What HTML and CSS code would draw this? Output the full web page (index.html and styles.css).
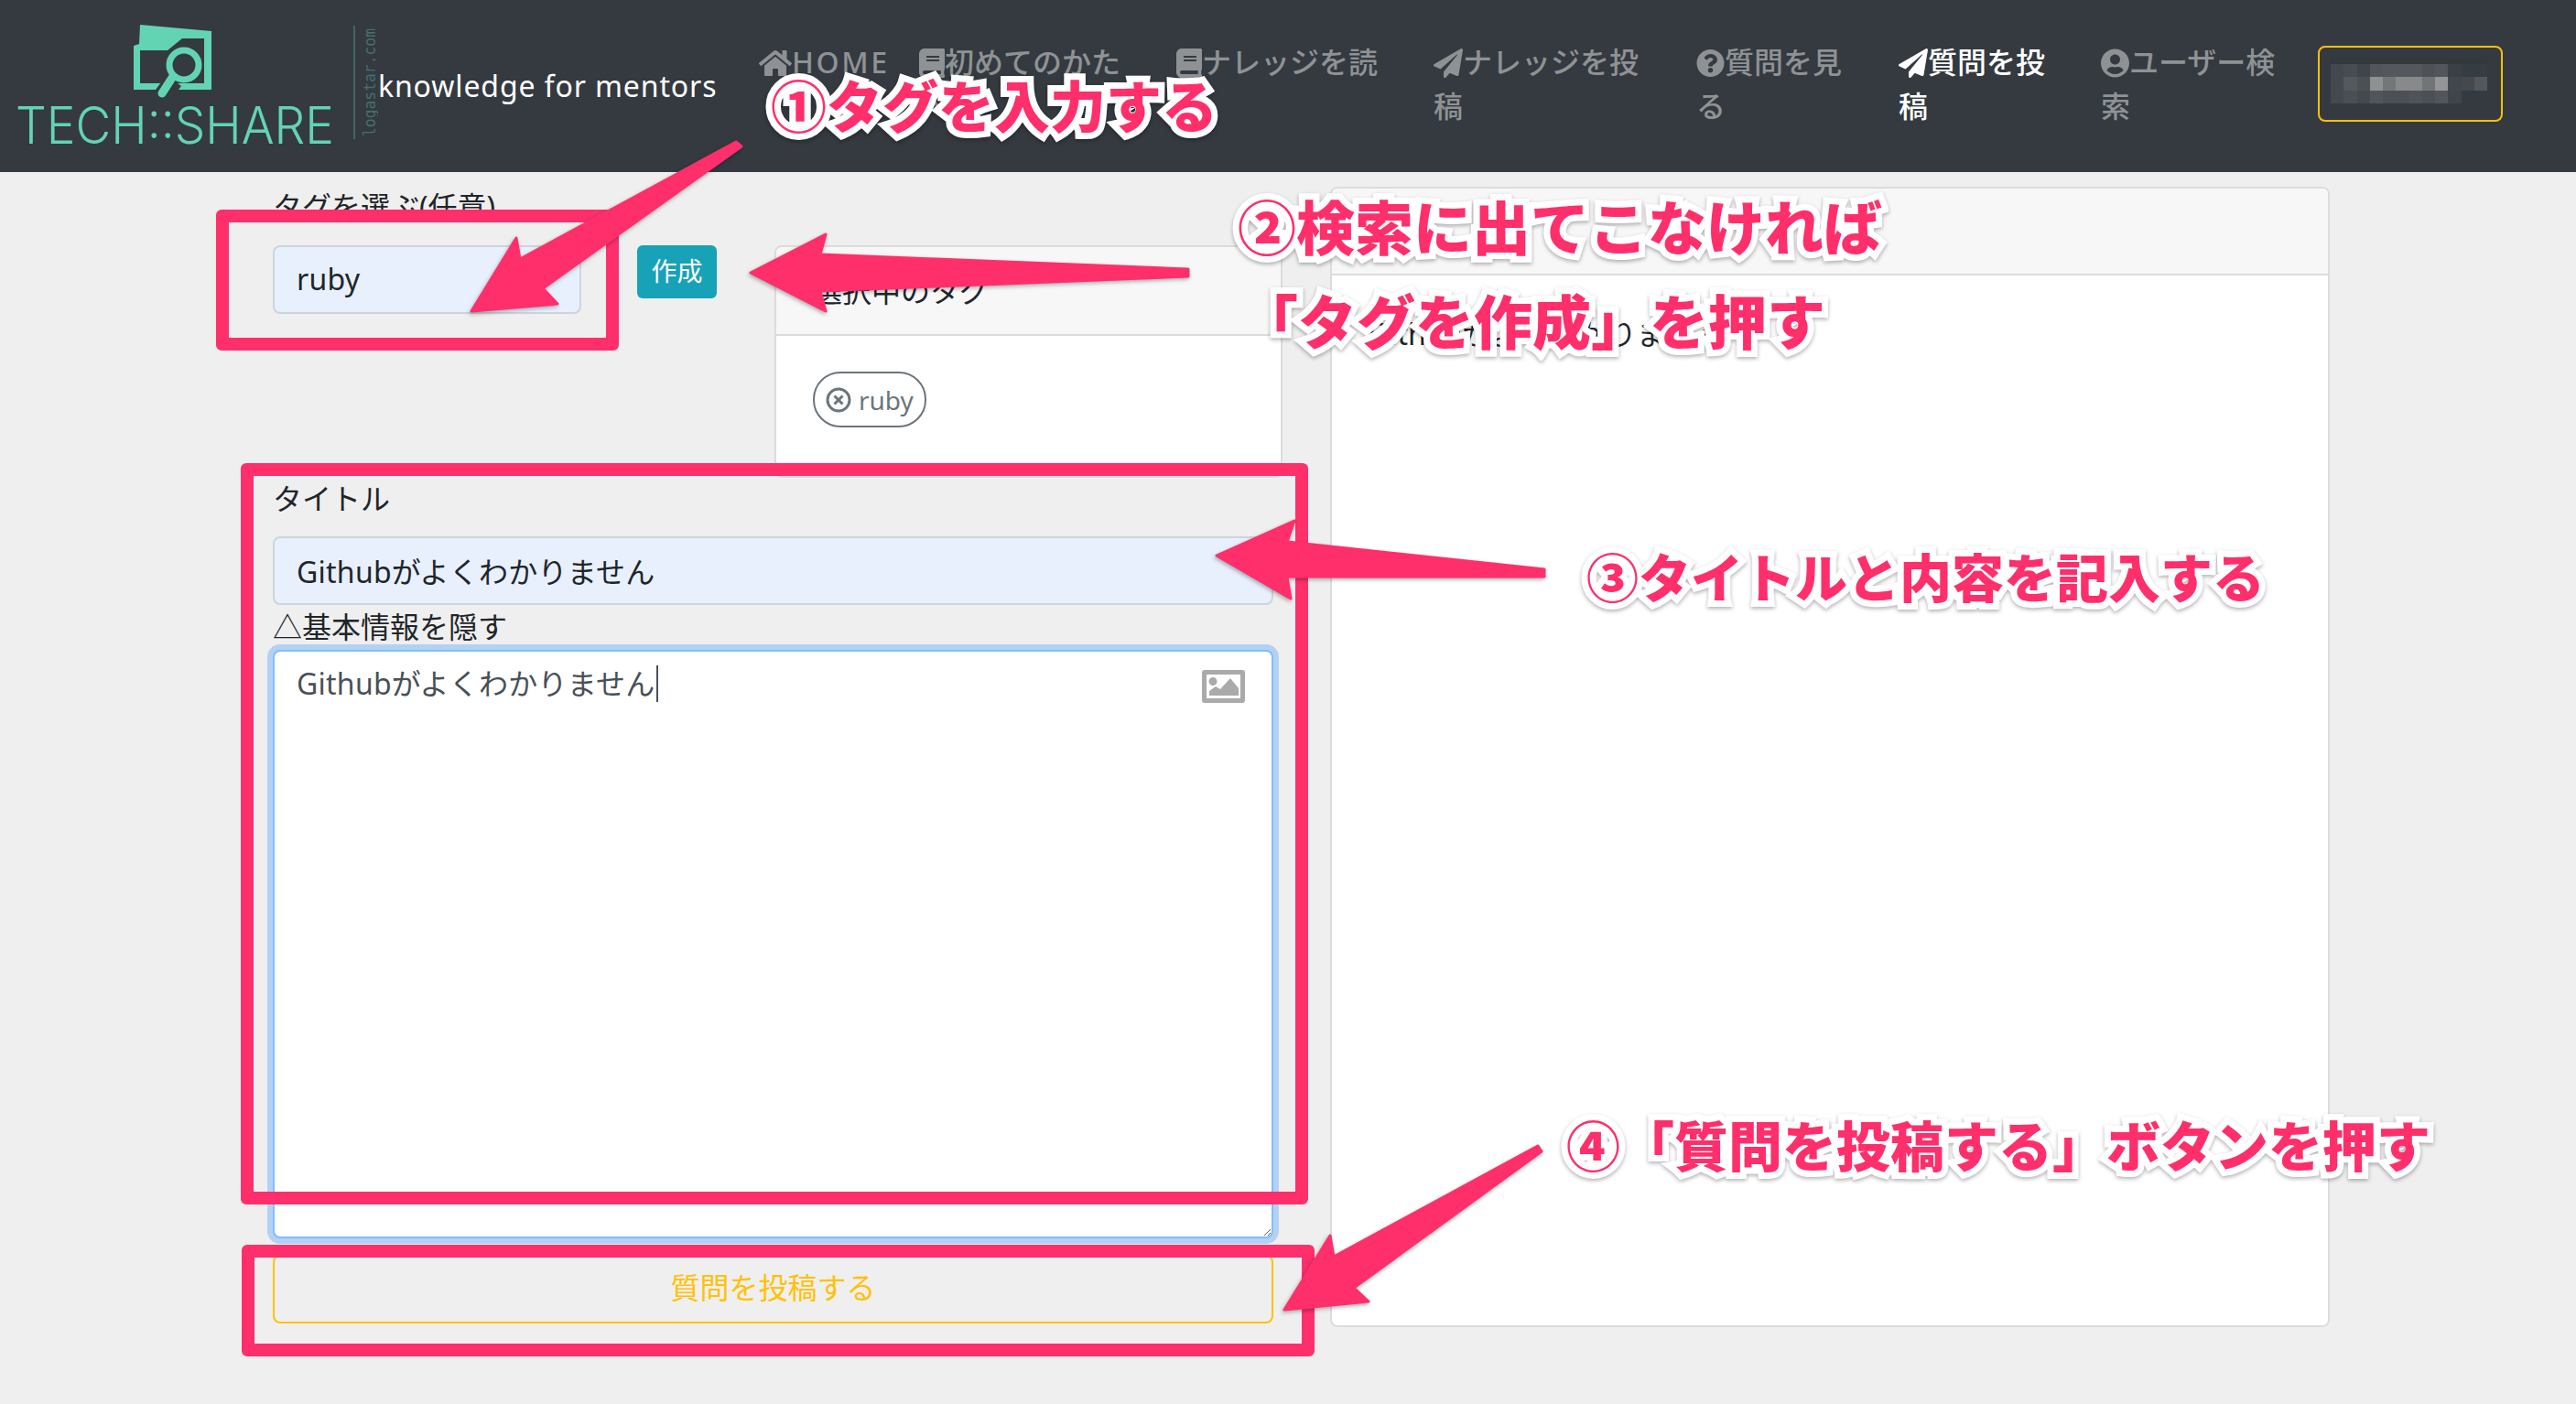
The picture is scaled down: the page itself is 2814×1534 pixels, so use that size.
FILE: index.html
```html
<!DOCTYPE html>
<html lang="ja">
<head>
<meta charset="utf-8">
<title>TECH::SHARE</title>
<link rel="stylesheet" href="styles.css">
</head>
<body>
<div class="page">
  <header class="navbar">
    <svg class="logo" viewBox="0 0 413 188" width="413" height="188" aria-label="TECH::SHARE">
      <path class="logo-fill" d="M153 27 L231 34 V98 H146 V50 L152 48 Z"/>
      <path class="logo-cut" d="M153 55 H183 L199 42 H223 V91 H153 Z"/>
      <circle class="logo-ring" cx="201" cy="71" r="16"/>
      <line class="logo-gap" x1="190" y1="88" x2="178" y2="104"/>
      <line class="logo-handle" x1="188" y1="85" x2="177" y2="102"/>
      <text class="logo-text" x="17" y="157" textLength="348" lengthAdjust="spacingAndGlyphs">TECH::SHARE</text>
      <line class="logo-rule" x1="387" y1="28" x2="387" y2="152"/>
      <text class="logo-domain" transform="translate(410 149) rotate(-90)" textLength="118" lengthAdjust="spacingAndGlyphs">logastar.com</text>
    </svg>
    <div class="tagline">knowledge for mentors</div>
    <nav class="nav">
      <a class="nav-link nav-home"><svg class="ico ico-home" viewBox="0 0 576 512"><path d="M280.37 148.26L96 300.11V464a16 16 0 0 0 16 16l112.06-.29a16 16 0 0 0 15.92-16V368a16 16 0 0 1 16-16h64a16 16 0 0 1 16 16v95.64a16 16 0 0 0 16 16.05L464 480a16 16 0 0 0 16-16V300L295.67 148.26a12.19 12.19 0 0 0-15.3 0zM571.6 251.47L488 182.56V44.05a12 12 0 0 0-12-12h-56a12 12 0 0 0-12 12v72.61L318.47 43a48 48 0 0 0-61 0L4.34 251.47a12 12 0 0 0-1.6 16.9l25.5 31A12 12 0 0 0 45.15 301l235.22-193.74a12.19 12.19 0 0 1 15.3 0L530.9 301a12 12 0 0 0 16.9-1.6l25.5-31a12 12 0 0 0-1.7-16.93z"/></svg>HOME</a>
      <a class="nav-link"><svg class="ico ico-book" viewBox="0 0 448 512"><path d="M448 360V24c0-13.3-10.7-24-24-24H96C43 0 0 43 0 96v320c0 53 43 96 96 96h328c13.3 0 24-10.7 24-24v-16c0-7.5-3.5-14.3-8.9-18.7-4.2-15.4-4.2-59.3 0-74.7 5.4-4.3 8.9-11.1 8.9-18.6zM128 134c0-3.3 2.7-6 6-6h212c3.3 0 6 2.7 6 6v20c0 3.3-2.7 6-6 6H134c-3.3 0-6-2.7-6-6v-20zm0 64c0-3.3 2.7-6 6-6h212c3.3 0 6 2.7 6 6v20c0 3.3-2.7 6-6 6H134c-3.3 0-6-2.7-6-6v-20zm253.4 250H96c-17.7 0-32-14.3-32-32 0-17.6 14.4-32 32-32h285.4c-1.9 17.1-1.9 46.9 0 64z"/></svg>初めてのかたへ</a>
      <a class="nav-link"><svg class="ico ico-book" viewBox="0 0 448 512"><path d="M448 360V24c0-13.3-10.7-24-24-24H96C43 0 0 43 0 96v320c0 53 43 96 96 96h328c13.3 0 24-10.7 24-24v-16c0-7.5-3.5-14.3-8.9-18.7-4.2-15.4-4.2-59.3 0-74.7 5.4-4.3 8.9-11.1 8.9-18.6zM128 134c0-3.3 2.7-6 6-6h212c3.3 0 6 2.7 6 6v20c0 3.3-2.7 6-6 6H134c-3.3 0-6-2.7-6-6v-20zm0 64c0-3.3 2.7-6 6-6h212c3.3 0 6 2.7 6 6v20c0 3.3-2.7 6-6 6H134c-3.3 0-6-2.7-6-6v-20zm253.4 250H96c-17.7 0-32-14.3-32-32 0-17.6 14.4-32 32-32h285.4c-1.9 17.1-1.9 46.9 0 64z"/></svg>ナレッジを読む</a>
      <a class="nav-link"><svg class="ico ico-plane" viewBox="0 0 512 512"><path d="M476 3.2L12.5 270.6c-18.1 10.4-15.8 35.6 2.2 43.2L121 358.4l287.3-253.2c5.5-4.9 13.3 2.6 8.6 8.3L176 407v80.5c0 23.6 28.5 32.9 42.5 15.8L282 426l124.6 52.2c14.2 6 30.4-2.9 33-18.2l72-432C515 7.8 493.3-6.8 476 3.2z"/></svg>ナレッジを投稿</a>
      <a class="nav-link"><svg class="ico ico-circle" viewBox="0 0 512 512"><path d="M504 256c0 136.997-111.043 248-248 248S8 392.997 8 256C8 119.083 119.043 8 256 8s248 111.083 248 248zM262.655 90c-54.497 0-89.255 22.957-116.549 63.758-3.536 5.286-2.353 12.415 2.715 16.258l34.699 26.31c5.205 3.947 12.621 3.008 16.665-2.122 17.864-22.658 30.113-35.797 57.303-35.797 20.429 0 45.698 13.148 45.698 32.958 0 14.976-12.363 22.667-32.534 33.976C247.128 238.528 216 254.941 216 296v4c0 6.627 5.373 12 12 12h56c6.627 0 12-5.373 12-12v-1.333c0-28.462 83.186-29.647 83.186-106.667 0-58.002-60.165-102-116.531-102zM256 338c-25.365 0-46 20.635-46 46 0 25.364 20.635 46 46 46s46-20.636 46-46c0-25.365-20.635-46-46-46z"/></svg>質問を見る</a>
      <a class="nav-link is-active"><svg class="ico ico-plane" viewBox="0 0 512 512"><path d="M476 3.2L12.5 270.6c-18.1 10.4-15.8 35.6 2.2 43.2L121 358.4l287.3-253.2c5.5-4.9 13.3 2.6 8.6 8.3L176 407v80.5c0 23.6 28.5 32.9 42.5 15.8L282 426l124.6 52.2c14.2 6 30.4-2.9 33-18.2l72-432C515 7.8 493.3-6.8 476 3.2z"/></svg>質問を投稿</a>
      <a class="nav-link"><svg class="ico ico-circle" viewBox="0 0 496 512"><path d="M248 8C111 8 0 119 0 256s111 248 248 248 248-111 248-248S385 8 248 8zm0 96c48.6 0 88 39.4 88 88s-39.4 88-88 88-88-39.4-88-88 39.4-88 88-88zm0 344c-58.7 0-111.3-26.6-146.5-68.2 18.8-35.4 55.6-59.8 98.5-59.8 2.4 0 4.8.4 7.1 1.1 13 4.2 26.6 6.9 40.9 6.9 14.3 0 28-2.7 40.9-6.9 2.3-.7 4.7-1.1 7.1-1.1 42.9 0 79.7 24.4 98.5 59.8C359.3 421.4 306.7 448 248 448z"/></svg>ユーザー検索</a>
    </nav>
    <div class="user-btn">
      <svg class="pixels" viewBox="0 0 12 3.5" width="171" height="50" preserveAspectRatio="none" shape-rendering="crispEdges">
        <rect width="12" height="0.5" fill="#32393a"/>
        <rect y="0.5" width="1" height="1" fill="#42484f"/><rect x="1" y="0.5" width="1" height="1" fill="#474c53"/><rect x="2" y="0.5" width="1" height="1" fill="#3f454b"/><rect x="3" y="0.5" width="1" height="1" fill="#52565c"/><rect x="4" y="0.5" width="3" height="1" fill="#54585e"/><rect x="7" y="0.5" width="1" height="1" fill="#4e5257"/><rect x="8" y="0.5" width="1" height="1" fill="#52565c"/><rect x="9" y="0.5" width="1" height="1" fill="#3a4046"/><rect x="10" y="0.5" width="2" height="1" fill="#353c42"/>
        <rect y="1.5" width="1" height="1" fill="#44494f"/><rect x="1" y="1.5" width="1" height="1" fill="#55595e"/><rect x="2" y="1.5" width="1" height="1" fill="#4b5055"/><rect x="3" y="1.5" width="1" height="1" fill="#8e9092"/><rect x="4" y="1.5" width="1" height="1" fill="#74777a"/><rect x="5" y="1.5" width="2" height="1" fill="#87898b"/><rect x="7" y="1.5" width="1" height="1" fill="#727578"/><rect x="8" y="1.5" width="1" height="1" fill="#939597"/><rect x="9" y="1.5" width="1" height="1" fill="#42474c"/><rect x="10" y="1.5" width="1" height="1" fill="#45494f"/><rect x="11" y="1.5" width="1" height="1" fill="#53575c"/>
        <rect y="2.5" width="1" height="1" fill="#44494f"/><rect x="1" y="2.5" width="1" height="1" fill="#4a4f54"/><rect x="2" y="2.5" width="1" height="1" fill="#45494f"/><rect x="3" y="2.5" width="1" height="1" fill="#52565b"/><rect x="4" y="2.5" width="2" height="1" fill="#4c5055"/><rect x="6" y="2.5" width="1" height="1" fill="#50545a"/><rect x="7" y="2.5" width="1" height="1" fill="#4c5056"/><rect x="8" y="2.5" width="1" height="1" fill="#52565b"/><rect x="9" y="2.5" width="1" height="1" fill="#3f454b"/><rect x="10" y="2.5" width="2" height="1" fill="#343a41"/>
      </svg>
    </div>
  </header>

  <main class="main">
    <section class="form-col">
      <div class="tag-row">
        <div class="tag-field">
          <label class="label label-tag">タグを選ぶ(任意)</label>
          <input class="input" type="text" value="ruby">
        </div>
        <div class="tag-action"><button class="btn-create">作成</button></div>
        <div class="tag-selected">
          <div class="card card-tags">
            <div class="card-header header-tags">選択中のタグ</div>
            <div class="card-body body-tags">
              <span class="chip"><svg class="chip-x" viewBox="0 0 28 28"><circle cx="14" cy="14" r="12"/><path d="M9.500 9.500 L18.500 18.500 M18.500 9.500 L9.500 18.500"/></svg>ruby</span>
            </div>
          </div>
        </div>
      </div>
      <label class="label label-title">タイトル</label>
      <input class="input input-title" type="text" value="Githubがよくわかりません">
      <div class="label">△基本情報を隠す</div>
      <div class="editor">
        <textarea class="textarea">Githubがよくわかりません</textarea>
        <span class="caret"></span>
        <svg class="editor-img" viewBox="0 0 47 36"><path fill-rule="evenodd" d="M3 0H44A3 3 0 0 1 47 3V33A3 3 0 0 1 44 36H3A3 3 0 0 1 0 33V3A3 3 0 0 1 3 0ZM5 5V31H42V5ZM12 8A4.500 4.500 0 1 1 12 17A4.500 4.500 0 0 1 12 8ZM8 28V23L15 18L20 21L31 9L40 20V28Z"/></svg>
      </div>
      <button class="btn-submit">質問を投稿する</button>
    </section>
    <section class="card card-preview">
      <div class="card-header header-preview"></div>
      <div class="card-body body-preview">Githubがよくわかりません</div>
    </section>
  </main>

  <div class="frame frame-tag"></div>
  <div class="frame frame-content"></div>
  <div class="frame frame-submit"></div>

  <svg class="arrows" viewBox="0 0 2814 1534" width="2814" height="1534">
    <polygon points="804,155 568,283 564,260 515,340 609,332 593,315 810,160"/>
    <polygon points="1298,294 896,278 902,256 820,298 902,340 896,318 1298,302"/>
    <polygon points="1687,622 1406,592 1414,569 1329,607 1410,654 1406,630 1687,630"/>
    <polygon points="1680,1252 1457,1373 1453,1350 1403,1431 1495,1422 1479,1407 1684,1258"/>
  </svg>

  <div class="note note-1">①タグを入力する</div>
  <div class="note note-2">②検索に出てこなければ</div>
  <div class="note note-3">「タグを作成」を押す</div>
  <div class="note note-4">③タイトルと内容を記入する</div>
  <div class="note note-5">④「質問を投稿する」ボタンを押す</div>
</div>
</body>
</html>
```
FILE: styles.css
```css
* { box-sizing: border-box; }
html, body { margin: 0; padding: 0; }
body {
  background: #efefef;
  color: #212529;
  font-family: "Noto Sans", "Noto Sans CJK JP", sans-serif;
  font-size: 32px;
  line-height: 48px;
}
.page { position: relative; width: 2814px; height: 1534px; overflow: hidden; }

/* navbar */
.navbar { display: flex; height: 188px; background: #343a40; }
.logo { flex: none; }
.logo-fill { fill: #63d4b3; }
.logo-cut { fill: #343a40; }
.logo-ring { fill: #343a40; stroke: #63d4b3; stroke-width: 7; }
.logo-gap { stroke: #343a40; stroke-width: 20; }
.logo-handle { stroke: #63d4b3; stroke-width: 9; stroke-linecap: round; }
.logo-text { fill: #63d4b3; font-family: "Inter", sans-serif; font-weight: 300; font-size: 56px; }
.logo-rule { stroke: #3f6860; stroke-width: 2; }
.logo-domain { fill: #44706a; font-family: "DejaVu Sans Mono", monospace; font-size: 17px; }
.tagline { flex: none; width: 416px; padding-top: 70px; color: #fff; letter-spacing: 0.88px; }
.nav {
  flex: none;
  display: grid;
  grid-template-columns: 175px 281px 281px 287px 221px 221px 237px;
  padding-top: 44px;
  align-items: start;
}
.nav-link { display: block; padding-right: 40px; color: #8f9295; font-weight: 500; }
.nav-link.is-active { color: #fff; }
.nav-home { padding-right: 0; letter-spacing: 2.6px; }
.ico { display: inline-block; height: 32px; vertical-align: -5px; fill: currentColor; }
.ico-home { width: 36px; }
.ico-book { width: 28px; }
.ico-plane { width: 32px; }
.ico-circle { width: 31px; }
.user-btn {
  flex: none;
  align-self: flex-start;
  width: 202px;
  height: 83px;
  margin-top: 50px;
  padding: 11px 0 0 12px;
  border: 2px solid #ffc107;
  border-radius: 8px;
}
.pixels { display: block; }

/* layout */
.main {
  display: grid;
  grid-template-columns: 1093px 1092px;
  column-gap: 62px;
  padding: 16px 0 0 298px;
}
.label { display: block; }
.label-tag { height: 64px; padding-top: 2px; line-height: 40px; }
.label-title { margin-bottom: 17px; }
.tag-row { display: grid; grid-template-columns: 337px 211px 555px; width: 1103px; height: 317px; }
.tag-action, .tag-selected { padding-top: 64px; }
.tag-action { padding-left: 61px; }

/* inputs */
.input {
  display: block;
  width: 100%;
  height: 75px;
  padding: 0 24px 2px;
  border: 2px solid #ced4da;
  border-radius: 8px;
  background: #e8f0fe;
  color: #212529;
  font: inherit;
  letter-spacing: 0.25px;
}
.input-title { width: 1093px; }
.btn-create {
  display: block;
  width: 87px;
  height: 58px;
  padding: 0 0 3px;
  border: 0;
  border-radius: 6px;
  background: #17a2b8;
  color: #fff;
  font: inherit;
  font-size: 28px;
  line-height: 42px;
}

/* cards */
.card { border: 2px solid #dcdcdc; border-radius: 8px; background: #fff; }
.card-header { background: #f7f7f7; border-bottom: 2px solid #dcdcdc; border-radius: 6px 6px 0 0; }
.card-tags { height: 254px; }
.header-tags { height: 97px; padding: 24px 40px 0; }
.body-tags { padding: 39px 40px 0; }
.chip {
  display: inline-flex;
  align-items: center;
  gap: 8px;
  height: 61px;
  padding: 0 12px 0 12px;
  border: 2px solid #6c757d;
  border-radius: 30px;
  color: #6c757d;
  font-size: 28px;
}
.chip-x { width: 28px; height: 28px; fill: none; stroke: #6c757d; stroke-width: 3; }
.card-preview { height: 1246px; }
.header-preview { height: 95px; }
.body-preview { padding: 40px; }

/* editor */
.editor { position: relative; height: 643px; margin-top: 1px; }
.textarea {
  display: block;
  width: 1093px;
  height: 643px;
  padding: 11px 24px;
  border: 2px solid #80bdff;
  border-radius: 8px;
  outline: 0;
  box-shadow: 0 0 0 6px rgba(0, 123, 255, 0.25);
  color: #495057;
  font: inherit;
  letter-spacing: 0.25px;
}
.caret { position: absolute; left: 419px; top: 17px; width: 2px; height: 40px; background: #495057; }
.editor-img { position: absolute; left: 1015px; top: 22px; width: 47px; height: 36px; fill: #aaa; }
.btn-submit {
  display: block;
  width: 1093px;
  height: 75px;
  margin-top: 18px;
  padding: 0 0 3px;
  border: 2px solid #ffc107;
  border-radius: 8px;
  background: transparent;
  color: #ffc107;
  font: inherit;
}

/* annotations */
.frame {
  position: absolute;
  border: 14px solid #fe2f6b;
  border-radius: 6px;
}
.frame-tag { left: 236px; top: 229px; width: 440px; height: 154px; }
.frame-content { left: 263px; top: 506px; width: 1166px; height: 810px; }
.frame-submit { left: 264px; top: 1360px; width: 1172px; height: 122px; }
.arrows {
  position: absolute;
  left: 0;
  top: 0;
  fill: #fe2f6b;
  stroke: #fe2f6b;
  stroke-width: 3;
  stroke-linejoin: round;
  filter: drop-shadow(-1px 2px 2px rgba(0, 0, 0, 0.3));
}
.note {
  position: absolute;
  color: #fe2f6b;
  font-family: "Noto Sans CJK JP", sans-serif;
  font-weight: 900;
  line-height: 80px;
  white-space: nowrap;
  -webkit-text-stroke: 14px #fff;
  paint-order: stroke fill;
  filter: drop-shadow(0 2px 2px rgba(0, 0, 0, 0.3));
}
.note-1 { left: 842px; top: 74px; font-size: 61px; }
.note-2 { left: 1352px; top: 205px; font-size: 64px; }
.note-3 { left: 1354px; top: 308px; font-size: 64px; }
.note-4 { left: 1733px; top: 588px; font-size: 57px; }
.note-5 { left: 1711px; top: 1210px; font-size: 59px; }
```
